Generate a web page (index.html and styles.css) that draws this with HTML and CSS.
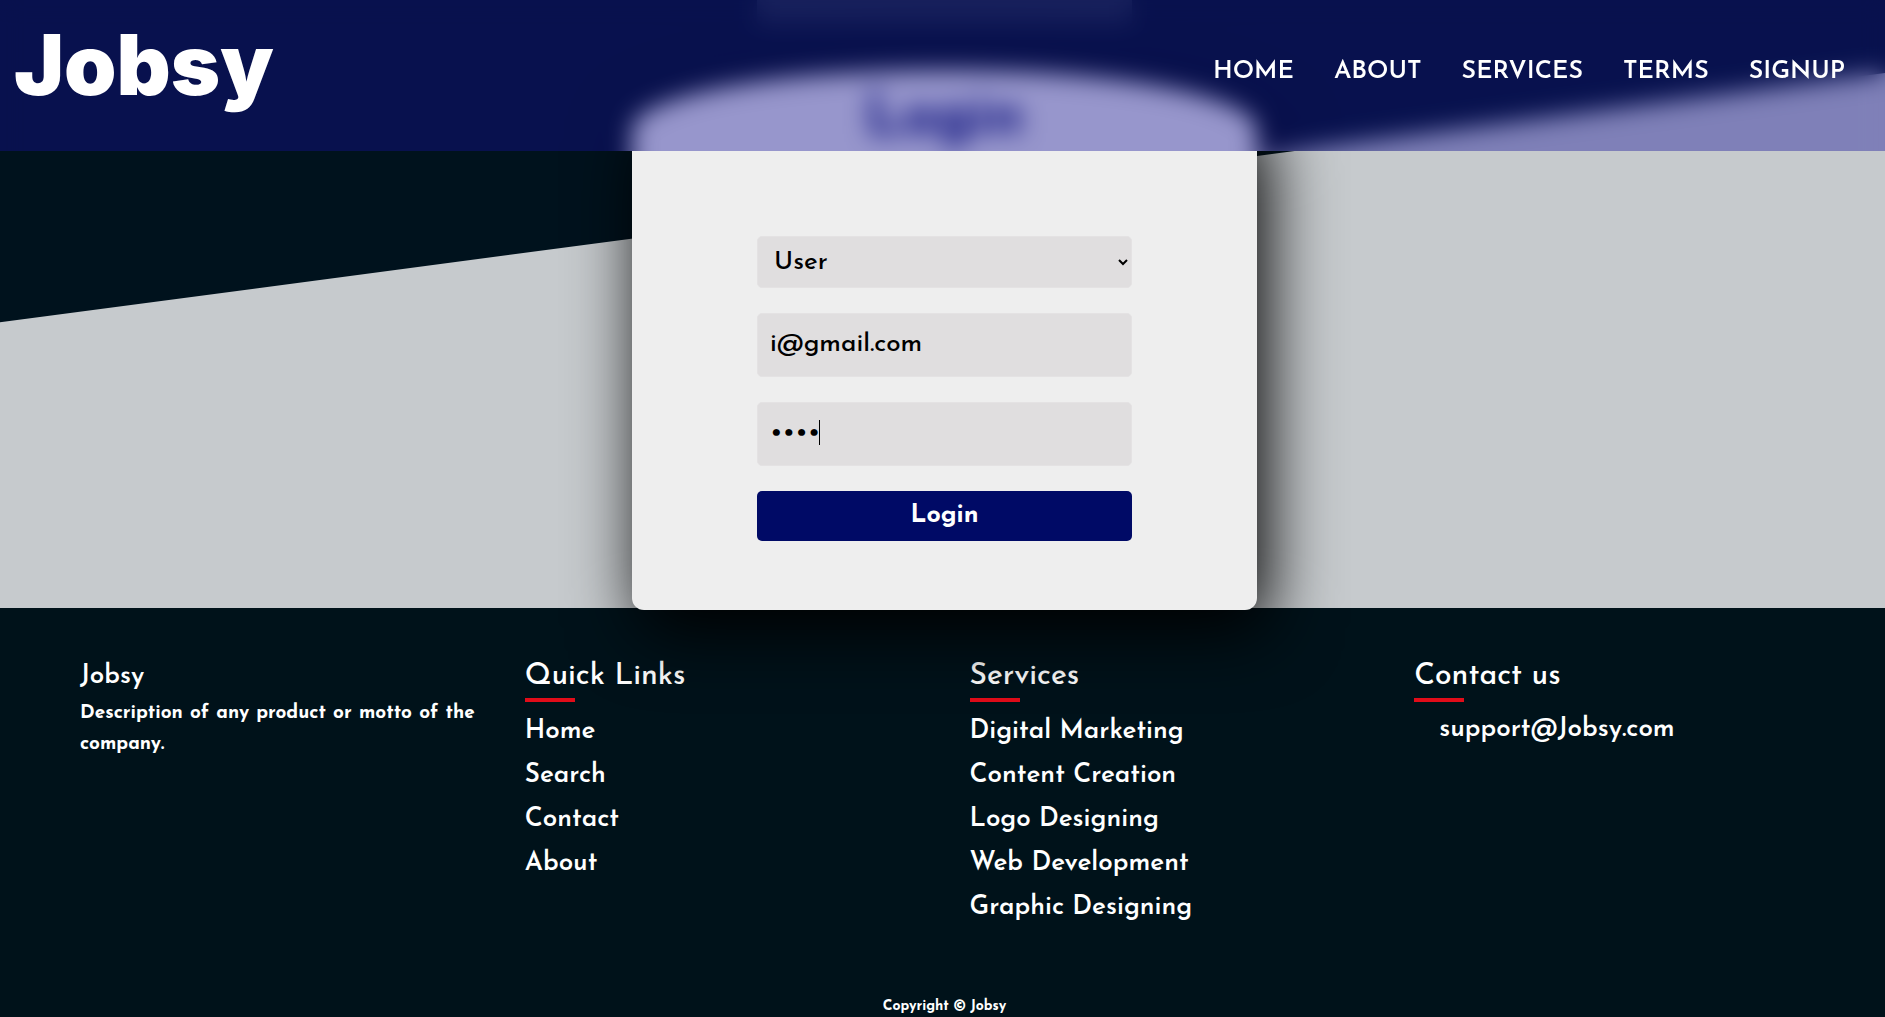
FILE: index.html
```html
<!DOCTYPE html>
<html lang="en">
<head>
  <meta charset="utf-8">
  <meta name="viewport" content="width=device-width, initial-scale=1">
  <title>Jobsy</title>
  <link rel="stylesheet" href="styles.css">
</head>
<body>
  <header class="header">
    <a class="logo" href="#">Jobsy</a>
    <nav class="nav">
      <a href="#">HOME</a>
      <a href="#">ABOUT</a>
      <a href="#">SERVICES</a>
      <a href="#">TERMS</a>
      <a href="#">SIGNUP</a>
    </nav>
  </header>

  <main class="hero">
    <div class="banner"></div>
    <form class="card">
      <h1 class="card-title">Login</h1>
      <select class="field field-select" aria-label="Account type">
        <option>User</option>
        <option>Company</option>
      </select>
      <input class="field" type="email" aria-label="Email" value="i@gmail.com">
      <div class="password">
        <input class="field" type="password" aria-label="Password" value="1234">
      </div>
      <button class="submit" type="submit">Login</button>
    </form>
  </main>

  <footer class="footer">
    <div class="columns">
      <section>
        <h2 class="brand">Jobsy</h2>
        <p class="about">Description of any product or motto of the company.</p>
      </section>
      <section>
        <h2 class="heading">Quick Links</h2>
        <ul class="links">
          <li><a href="#">Home</a></li>
          <li><a href="#">Search</a></li>
          <li><a href="#">Contact</a></li>
          <li><a href="#">About</a></li>
        </ul>
      </section>
      <section>
        <h2 class="heading">Services</h2>
        <ul class="links">
          <li><a href="#">Digital Marketing</a></li>
          <li><a href="#">Content Creation</a></li>
          <li><a href="#">Logo Designing</a></li>
          <li><a href="#">Web Development</a></li>
          <li><a href="#">Graphic Designing</a></li>
        </ul>
      </section>
      <section>
        <h2 class="heading">Contact us</h2>
        <ul class="links links-contact">
          <li><a href="#">support@Jobsy.com</a></li>
        </ul>
      </section>
    </div>
    <p class="copyright">Copyright © Jobsy</p>
  </footer>
</body>
</html>
```
FILE: styles.css
```css
* {
  box-sizing: border-box;
  margin: 0;
  padding: 0;
}

body {
  min-height: 100vh;
  display: flex;
  flex-direction: column;
  background: #00121a;
  color: #fff;
  font-family: "Josefin Sans", Lato, sans-serif;
  font-size: 26px;
  font-weight: 500;
}

a {
  color: inherit;
  text-decoration: none;
}

/* Header */
.header {
  position: fixed;
  top: 0;
  left: 0;
  right: 0;
  z-index: 2;
  height: 151px;
  padding: 0 40px 0 14px;
  display: flex;
  align-items: center;
  justify-content: space-between;
}

/* The blur layer reaches below the bar so that its masked edge stays soft */
.header::before {
  content: "";
  position: absolute;
  inset: 0 0 -60px;
  z-index: -1;
  background: rgba(20, 18, 152, 0.4);
  backdrop-filter: blur(12px);
  mask-image: linear-gradient(#000 151px, transparent 151px);
}

.logo {
  padding-bottom: 22px;
  font-family: Inter, sans-serif;
  font-size: 84px;
  font-weight: 900;
  line-height: 112px;
}

.nav {
  display: flex;
  gap: 40px;
  padding-bottom: 8px;
  font-size: 25px;
  font-weight: 600;
}

/* Login */
.hero {
  position: relative;
  padding-left: 4px;
  display: flex;
  flex-direction: column;
  align-items: center;
  background: #00121d;
}

.hero::before {
  content: "";
  position: absolute;
  inset: 0;
  background: #c6cacd;
  clip-path: polygon(0 53%, 100% 12%, 100% 100%, 0 100%);
}

.banner {
  position: relative;
  width: 375px;
  height: 24px;
  margin-bottom: 46px;
  background: rgba(255, 255, 255, 0.1);
}

.card {
  position: relative;
  z-index: 1;
  width: 625px;
  margin-bottom: -2px;
  padding: 0 125px 69px;
  display: flex;
  flex-direction: column;
  gap: 25px;
  background: #eee;
  border-radius: 50% 50% 12px 12px / 60px 60px 12px 12px;
  box-shadow: 10px 20px 70px #000;
}

.card-title {
  height: 141px;
  color: #000a66;
  font-size: 58px;
  font-weight: 700;
  line-height: 100px;
  text-align: center;
}

.field {
  width: 100%;
  height: 64px;
  padding: 0 12px 2px;
  border: 1px solid #e4e2e3;
  border-radius: 5px;
  outline: none;
  background: #e0dedf;
  color: #000;
  font: inherit;
}

.field-select {
  height: 52px;
  padding-bottom: 0;
}

.password {
  position: relative;
  display: flex;
}

/* Text cursor after the typed characters */
.password::after {
  content: "";
  position: absolute;
  top: 18px;
  left: 62px;
  width: 1px;
  height: 25px;
  background: #000;
}

.submit {
  height: 50px;
  padding-bottom: 2px;
  border: 0;
  border-radius: 5px;
  background: #000a66;
  color: #fff;
  font: inherit;
  font-size: 25px;
  font-weight: 700;
}

/* Footer */
.footer {
  flex: 1;
  padding: 48px 76px 0 80px;
  display: flex;
  flex-direction: column;
  background: #00121a;
}

.columns {
  flex: 1;
  display: grid;
  grid-template-columns: repeat(4, 1fr);
  gap: 50px;
}

.brand {
  font-size: 26px;
  font-weight: 600;
  line-height: 42px;
}

.about {
  font-size: 19px;
  font-weight: 700;
  line-height: 31px;
  text-align: justify;
}

.heading {
  margin-bottom: 8px;
  font-size: 30px;
  font-weight: 500;
  line-height: 42px;
}

.heading::after {
  content: "";
  display: block;
  width: 50px;
  height: 4px;
  background: #e10c19;
}

.links {
  list-style: none;
  font-weight: 600;
  line-height: 44px;
}

.links-contact {
  padding-left: 25px;
  line-height: 40px;
}

.copyright {
  font-size: 14px;
  font-weight: 700;
  line-height: 20px;
  text-align: center;
}
```
